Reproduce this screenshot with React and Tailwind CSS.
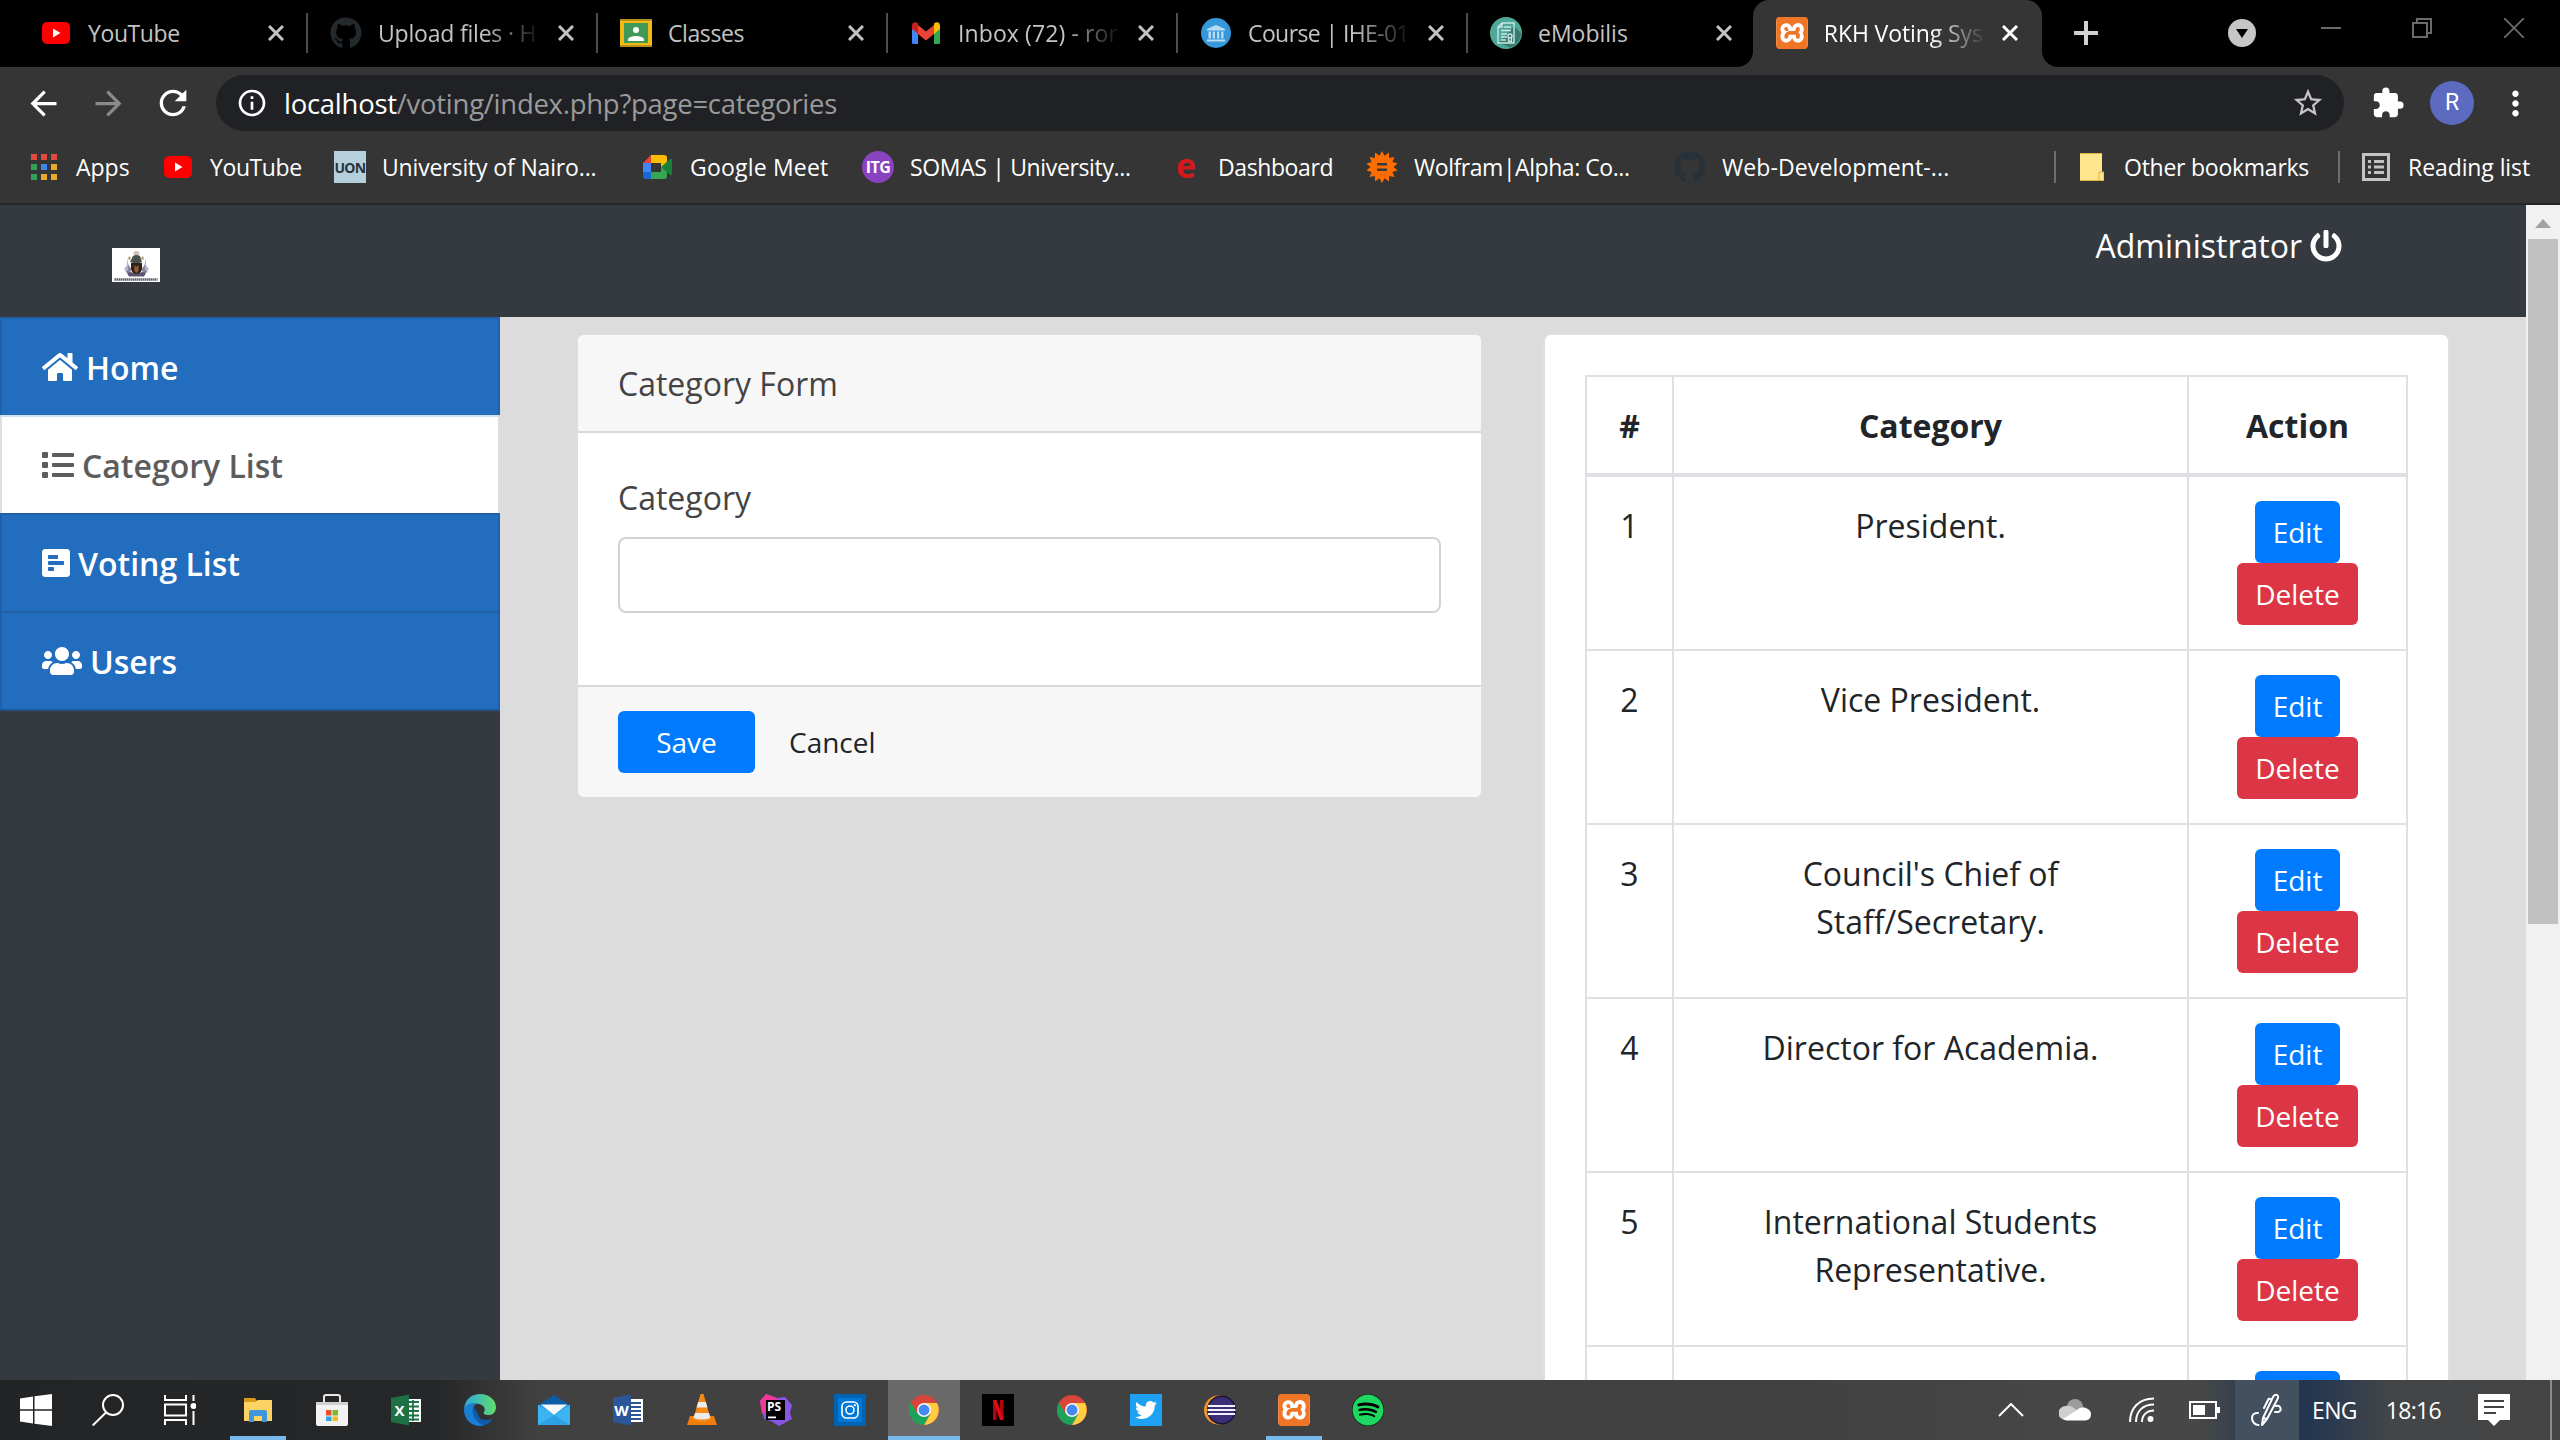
import React from "react";
import { FaHome, FaList, FaPollH, FaUsers, FaPowerOff, FaGithub, FaSpotify, FaTwitter } from "react-icons/fa";
import { MdArrowBack, MdArrowForward, MdRefresh, MdInfoOutline, MdStarBorder, MdExtension, MdMoreVert } from "react-icons/md";
import { SiXampp } from "react-icons/si";

/* ---------- favicons ---------- */

function YouTube() {
  return (
    <svg viewBox="0 0 32 32" className="size-8 shrink-0">
      <rect x="2" y="5" width="28" height="22" rx="5" fill="#f00" />
      <path d="M13 11.500v9l7.500-4.500z" fill="#fff" />
    </svg>
  );
}

function Classroom() {
  return (
    <svg viewBox="0 0 32 32" className="size-8 shrink-0">
      <rect y="2" width="32" height="28" fill="#f2bb13" />
      <path d="M0 2h32v2H0zM0 28h32v2H0z" fill="#b98f1f" />
      <rect x="4" y="6" width="24" height="20" fill="#3f9a57" />
      <circle cx="16" cy="13" r="3" fill="#fff" />
      <path d="M8 24v-2c2-4 14-4 16 0v2z" fill="#fff" />
    </svg>
  );
}

function Gmail() {
  return (
    <svg viewBox="0 0 32 32" className="size-8 shrink-0">
      <path d="M2 10v16q0 1 1.500 1H8V14z" fill="#4285f4" />
      <path d="M30 10v16q0 1-1.500 1H24V14z" fill="#34a853" />
      <path d="M8 8l8 6.500 8-6.500v9l-8 6.500-8-6.500z" fill="#ea4335" />
      <path d="M2 9c0-4 3-5 6-2.500V17l-6-5z" fill="#c5221f" />
      <path d="M30 9c0-4-3-5-6-2.500V17l6-5z" fill="#fbbc04" />
    </svg>
  );
}

function Course() {
  return (
    <svg viewBox="0 0 32 32" className="size-8 shrink-0">
      <circle cx="16" cy="16" r="15" fill="#3498db" />
      <path d="M7 12l9-4 9 4v1.500H7zM8.500 14.500H11v7H8.500zm4.200 0H15v7h-2.300zm4.300 0h2.300v7H17zm4.200 0h2.300v7h-2.300zM7 22.500h18V24.500H7z" fill="#b9dcf3" />
    </svg>
  );
}

function EMobilis() {
  return (
    <svg viewBox="0 0 32 32" className="size-8 shrink-0">
      <circle cx="16" cy="16" r="16" fill="#4fa89a" />
      <path d="M24 9l7 7c0 7-5 13-11 14.500L9 26z" fill="#37796f" />
      <path d="M12 6h12v20H8V10zM12 6v4H8M14 10h7M11 13.500h10M11 17h6M11 20h6M11 23h5" fill="none" stroke="#c8e8e2" strokeWidth="1.400" />
      <circle cx="20" cy="19" r="2" fill="none" stroke="#c8e8e2" strokeWidth="1.400" />
      <path d="M18.500 21v4l1.500-1 1.500 1v-4" fill="none" stroke="#c8e8e2" strokeWidth="1.200" />
    </svg>
  );
}

function Xampp() {
  return (
    <span className="flex size-8 shrink-0 items-center justify-center rounded-[5px] bg-white">
      <SiXampp className="size-8 text-[#ee7626]" />
    </span>
  );
}

const appColors = ["bg-[#e04a3f]", "bg-[#e04a3f]", "bg-[#e04a3f]", "bg-[#34a05a]", "bg-[#3f86e8]", "bg-[#e8a92a]", "bg-[#34a05a]", "bg-[#e8a92a]", "bg-[#e8a92a]"];

function AppsGrid() {
  return (
    <span className="grid size-8 shrink-0 grid-cols-[6px_6px_6px] place-content-center gap-[4px]">
      {appColors.map((c, i) => (
        <span key={i} className={"size-[6px] " + c} />
      ))}
    </span>
  );
}

function Meet() {
  return (
    <svg viewBox="0 0 32 32" className="size-8 shrink-0">
      <path d="M1 12l8-8v8z" fill="#ea4335" />
      <path d="M9 4h13q3 0 3 3v6l-6 4v-5H9z" fill="#fbbc04" />
      <path d="M1 12h8v9H1z" fill="#4285f4" />
      <path d="M1 21h8v7H4q-3 0-3-3z" fill="#1967d2" />
      <path d="M9 21h10v-5l6 4v5q0 3-3 3H9z" fill="#34a853" />
      <path d="M19 16l9-8q2-1 2 1v14q0 2-2 1z" fill="#188038" />
    </svg>
  );
}

const wolframPoints = Array.from({ length: 28 }, (_, i) => {
  const r = i % 2 ? 11.5 : 16;
  const a = (i * Math.PI) / 14;
  return `${16 + r * Math.sin(a)},${16 - r * Math.cos(a)}`;
}).join(" ");

function Wolfram() {
  return (
    <svg viewBox="0 0 32 32" className="size-8 shrink-0">
      <polygon points={wolframPoints} fill="#ff6d00" />
      <path d="M11 12h10v2.500H11zM11 17.500h10V20H11z" fill="#3a3a3a" />
    </svg>
  );
}

function Close() {
  return (
    <svg viewBox="0 0 16 16" className="size-4 shrink-0">
      <path d="M1 1l14 14M15 1L1 15" stroke="currentColor" strokeWidth="3" />
    </svg>
  );
}

/* ---------- browser chrome ---------- */

const fadeMask = "[mask-image:linear-gradient(to_right,black_65%,transparent_100%)]";

const tabs = [
  { icon: <YouTube />, label: "YouTube", cls: "tracking-[-0.4px]" },
  { icon: <FaGithub className="size-8 shrink-0 text-[#24292e]" />, label: "Upload files · H", cls: "tracking-[-0.2px]", fade: true },
  { icon: <Classroom />, label: "Classes", cls: "tracking-[-0.4px]" },
  { icon: <Gmail />, label: "Inbox (72) - ror", cls: "tracking-[0.1px]", fade: true },
  { icon: <Course />, label: "Course | IHE-01", cls: "tracking-[-0.6px]", fade: true },
  { icon: <EMobilis />, label: "eMobilis", cls: "tracking-normal", last: true },
];

function TabStrip() {
  return (
    <div className="flex h-[67px] shrink-0 bg-black text-[23px] text-[#c4c4c4]">
      <div className="flex items-center pl-[18px] pb-px">
        {tabs.map((t) => (
          <div
            key={t.label}
            className={"flex h-10 items-center border-r-2 pl-[22px] " + (t.last ? "w-[285.8px] border-transparent" : "w-[290px] border-[#4d4d4d]")}
          >
            {t.icon}
            <span className={"ml-4 w-[164px] overflow-hidden whitespace-nowrap " + t.cls + (t.fade ? " " + fadeMask : "")}>{t.label}</span>
            <span className={t.last ? "ml-[14px] flex" : "ml-[16px] flex"}>
              <Close />
            </span>
          </div>
        ))}
      </div>
      <div className="-ml-[17px] flex">
        <div className="flex items-end bg-[#353535]">
          <span className="h-full w-4 rounded-br-[16px] bg-black" />
        </div>
        <div className="flex bg-black">
          <div className="flex w-[289px] items-center rounded-t-[16px] bg-[#353535] pb-px pl-[23px] text-white">
            <Xampp />
            <span className={"ml-4 w-[163px] overflow-hidden whitespace-nowrap tracking-[-0.1px] " + fadeMask}>RKH Voting Sys</span>
            <span className="ml-[15px] flex">
              <Close />
            </span>
          </div>
        </div>
        <div className="bg-[#353535]">
          <div className="h-full w-4 rounded-bl-[16px] bg-black" />
        </div>
      </div>
      <div className="flex items-start">
        <svg viewBox="0 0 24 24" className="mt-[21px] ml-[16px] size-6">
          <path d="M12 0v24M0 12h24" stroke="#d0d0d0" strokeWidth="4" />
        </svg>
        <svg viewBox="0 0 28 28" className="mt-[19px] ml-[130px] size-7">
          <circle cx="14" cy="14" r="14" fill="#c6c6c6" />
          <path d="M8 10h12l-6 9z" fill="#000" />
        </svg>
        <svg viewBox="0 0 20 20" className="mt-[18px] ml-[65px] size-5">
          <path d="M0 10h20" stroke="#6b6b6b" strokeWidth="2" />
        </svg>
        <svg viewBox="0 0 20 20" className="mt-[18px] ml-[71px] size-5">
          <path d="M1 5h14v14H1zM5 5V1h14v14h-4" fill="none" stroke="#6b6b6b" strokeWidth="2" />
        </svg>
        <svg viewBox="0 0 20 20" className="mt-[18px] ml-[72px] size-5">
          <path d="M0 0l20 20M20 0L0 20" stroke="#6b6b6b" strokeWidth="1.800" />
        </svg>
      </div>
    </div>
  );
}

function Toolbar() {
  return (
    <div className="flex h-[64px] shrink-0 items-end bg-[#353535] text-white">
      <div className="flex h-14 w-[216px] items-center pl-[24px]">
        <MdArrowBack className="size-[39px]" />
        <MdArrowForward className="ml-[26px] size-[39px] text-[#8a8a8a]" />
        <MdRefresh className="ml-[25px] size-[40px]" />
      </div>
      <div className="flex h-14 w-[2128px] items-center rounded-full bg-[#202124] pl-[20px]">
        <MdInfoOutline className="size-8" />
        <span className="ml-4 pt-px text-[27.500px] leading-none tracking-[-0.270px] text-[#9a9a9a]">
          <span className="text-white">localhost</span>/voting/index.php?page=categories
        </span>
        <MdStarBorder className="mr-[19px] ml-auto size-[34px] text-[#c4c4c4]" />
      </div>
      <div className="flex h-14 items-center pl-[27px]">
        <MdExtension className="size-[34px]" />
        <span className="ml-[25px] flex size-11 items-center justify-center rounded-full bg-[#5c6bc0] font-[Roboto] text-[23px]">R</span>
        <MdMoreVert className="ml-[22px] size-[39px]" />
      </div>
    </div>
  );
}

const bookmarks = [
  { icon: <AppsGrid />, label: "Apps", w: "w-[134px]", cls: "tracking-normal" },
  { icon: <YouTube />, label: "YouTube", w: "w-[172px]", cls: "tracking-[-0.4px]" },
  {
    icon: <span className="flex size-8 shrink-0 items-center justify-center bg-[#b5d0dc] text-[14px] font-bold tracking-[-0.7px] text-[#26323c]">UON</span>,
    label: "University of Nairo...",
    w: "w-[308px]",
    cls: "tracking-[-0.15px]",
  },
  { icon: <Meet />, label: "Google Meet", w: "w-[220px]", cls: "tracking-[0.2px]" },
  {
    icon: <span className="flex size-8 shrink-0 items-center justify-center rounded-full bg-[#8a43c0] text-[16px] font-bold tracking-[-0.5px] text-white">ITG</span>,
    label: "SOMAS | University...",
    w: "w-[308px]",
    cls: "tracking-[-0.35px]",
  },
  {
    icon: <span className="flex size-8 shrink-0 items-center justify-center pb-1 text-[34px] font-bold text-[#d3191c]">e</span>,
    label: "Dashboard",
    w: "w-[196px]",
    cls: "tracking-[-0.4px]",
  },
  { icon: <Wolfram />, label: "Wolfram|Alpha: Co...", w: "w-[308px]", cls: "tracking-[-0.45px]" },
  { icon: <FaGithub className="size-8 shrink-0 text-[#27313a]" />, label: "Web-Development-...", w: "w-[380px]", cls: "tracking-[0.1px]" },
];

function BookmarksBar() {
  return (
    <div className="flex h-[74px] shrink-0 items-center border-b-2 border-[#232629] bg-[#353535] pl-[28px] text-[23px] text-white">
      {bookmarks.map((b) => (
        <div key={b.label} className={"flex shrink-0 items-center " + b.w}>
          {b.icon}
          <span className={"ml-4 whitespace-nowrap " + b.cls}>{b.label}</span>
        </div>
      ))}
      <span className="h-8 w-0.5 bg-[#6e6e6e]" />
      <svg viewBox="0 0 24 28" className="ml-[24px] h-7 w-6">
        <path d="M0 0h22v28H0z" fill="#ffe68c" />
        <path d="M19 19h5v9h-5z" fill="#ffe68c" stroke="#d9b440" />
        <path d="M0 .5h22M0 27.500h24" stroke="#d9b440" />
      </svg>
      <span className="ml-[20px] tracking-[-0.25px]">Other bookmarks</span>
      <span className="ml-[29px] h-8 w-0.5 bg-[#6e6e6e]" />
      <svg viewBox="0 0 28 28" className="ml-[22px] size-7" fill="none" stroke="#c4c4c4" strokeWidth="3">
        <rect x="1.500" y="1.500" width="25" height="25" />
        <path d="M6 8.500h3M12 8.500h10M6 14h3M12 14h10M6 19.500h3M12 19.500h10" />
      </svg>
      <span className="ml-[18px] tracking-[-0.1px]">Reading list</span>
    </div>
  );
}

/* ---------- voting page ---------- */

function Crest() {
  return (
    <svg viewBox="0 0 48 34" className="h-[34px] w-12 bg-white">
      <ellipse cx="24.500" cy="5.500" rx="3" ry="2.500" fill="#cdbfb2" />
      <path d="M21 8q3.500-2 7 0l2 6-5.500 2L18 14z" fill="#4b524f" />
      <path d="M17 8l2 2-1 2-2-1zM31 8l-2 2 1 2 2-1z" fill="#b5a26a" />
      <path d="M15 10l1.500 7 3 4-2 5-4-2 2-6zM34 10l-1.500 7-3 4 2 5 4-2-2-6z" fill="#8d84a0" />
      <path d="M12 21l4-5v6l-2 1zM37 21l-4-5v6l2 1z" fill="#b9b2c8" />
      <path d="M19 15h11v6q-1 5-5.500 6-4.500-1-5.500-6z" fill="#33211f" />
      <path d="M22.500 17l2 2 2-2v6l-2 2-2-2z" fill="#96602c" />
      <path d="M15 25l4-1q5.500 4 11 0l4 1-2 3.500H17z" fill="#5d526c" />
      <path d="M2.500 31.500h43" stroke="#4d4d58" strokeWidth="2.600" strokeDasharray="1.400 .6" />
    </svg>
  );
}

const nav = [
  { icon: <FaHome className="h-8 w-9" />, label: "Home" },
  { icon: <FaList className="size-8" />, label: "Category List", active: true },
  { icon: <FaPollH className="h-8 w-7" />, label: "Voting List" },
  { icon: <FaUsers className="h-8 w-10" />, label: "Users" },
];

function Sidebar() {
  return (
    <div className="w-[500px] shrink-0 bg-[#353a41]">
      <div className="border-b-2 border-[#1f5591]">
        {nav.map((n) => (
          <div
            key={n.label}
            className={
              "flex h-[98px] items-center gap-2 border-x-2 border-t-2 pl-10 font-semibold " +
              (n.active ? "border-x-[#dfdfdf] border-t-[#cfdff0] bg-white text-[#5c5c5c]" : "border-[#1f60a8] bg-[#226dbe] text-white")
            }
          >
            {n.icon}
            <span className="pt-px">{n.label}</span>
          </div>
        ))}
      </div>
    </div>
  );
}

function CategoryForm() {
  return (
    <div className="w-[907px] overflow-hidden rounded-[8px] border-2 border-[#dddddd] bg-white text-[#444]">
      <div className="border-b-2 border-[#d8d8d8] bg-[#f7f7f7] px-10 pt-[25px] pb-[23px] leading-[48px]">Category Form</div>
      <div className="p-10">
        <label className="mb-[15px] block pt-px leading-[48px]">Category</label>
        <div className="mb-8 h-[76px] rounded-[8px] border-2 border-[#d2d3d4]" />
      </div>
      <div className="flex border-t-2 border-[#d8d8d8] bg-[#f7f7f7] px-10 py-6 text-[28px]">
        <button className="h-[62px] w-[137px] rounded-[6px] bg-[#007bff] text-white">Save</button>
        <button className="ml-[34px] h-[62px] text-[#212529]">Cancel</button>
      </div>
    </div>
  );
}

const rows = [
  "President.",
  "Vice President.",
  "Council's Chief of Staff/Secretary.",
  "Director for Academia.",
  "International Students Representative.",
];

function CategoryTable() {
  return (
    <div className="h-[1200px] w-[907px] rounded-[8px] border-2 border-[#e0e0e0] bg-white p-10 text-center leading-[48px] text-[#212529]">
      <div className="border-l-2 border-t-2 border-[#dfe0e3]">
        <div className="grid h-[100px] grid-cols-[87px_515px_219px] border-b-4 border-[#dedfe4] font-bold">
          {["#", "Category", "Action"].map((h) => (
            <div key={h} className="border-r-2 border-[#dfe0e3] pt-[25px]">{h}</div>
          ))}
        </div>
        {rows.map((r, i) => (
          <div key={r} className="grid h-[174px] grid-cols-[87px_515px_219px] border-b-2 border-[#dfe0e3]">
            <div className="border-r-2 border-[#dfe0e3] pt-[25px]">{i + 1}</div>
            <div className="border-r-2 border-[#dfe0e3] px-6 pt-[25px]">{r}</div>
            <div className="flex flex-col items-center border-r-2 border-[#dfe0e3] py-6 text-[28px] leading-[42px] text-white">
              <button className="h-[62px] w-[85px] shrink-0 rounded-[6px] bg-[#007bff]">Edit</button>
              <button className="h-[62px] w-[121px] shrink-0 rounded-[6px] bg-[#dc3545]">Delete</button>
            </div>
          </div>
        ))}
        <div className="grid h-[174px] grid-cols-[87px_515px_219px]">
          <div className="border-r-2 border-[#dfe0e3]" />
          <div className="border-r-2 border-[#dfe0e3]" />
          <div className="flex justify-center border-r-2 border-[#dfe0e3] pt-6">
            <button className="h-[62px] w-[85px] rounded-[6px] bg-[#007bff]" />
          </div>
        </div>
      </div>
    </div>
  );
}

function Page() {
  return (
    <div className="flex h-[1175px] shrink-0 overflow-hidden bg-[#dcdcdc] text-[32px]">
      <div className="flex w-[2526px] shrink-0 flex-col">
        <div className="flex h-[112px] shrink-0 items-start justify-between bg-[#353a41] pr-[184px] pl-[112px] text-white">
          <div className="pt-[43px]">
            <Crest />
          </div>
          <div className="flex items-center gap-2 pt-[16px] leading-[48px]">
            <span className="pt-px">Administrator</span>
            <FaPowerOff className="size-8" />
          </div>
        </div>
        <div className="flex">
          <div className="h-[1063px] bg-[#353a41]">
            <Sidebar />
          </div>
          <div className="flex h-[1063px] flex-1 items-start justify-between overflow-hidden pt-4 pr-[76px] pl-[76px]">
            <CategoryForm />
            <CategoryTable />
          </div>
        </div>
      </div>
      <div className="w-[34px] bg-[#f1f1f1] px-0.5">
        <div className="flex h-[34px] items-center justify-center pt-0.5">
          <svg viewBox="0 0 16 9" className="h-[9px] w-4">
            <path d="M0 9l8-9 8 9z" fill="#a3a3a3" />
          </svg>
        </div>
        <div className="h-[685px] bg-[#c1c1c1]" />
      </div>
    </div>
  );
}

/* ---------- taskbar ---------- */

function Chrome() {
  return (
    <svg viewBox="0 0 32 32" className="size-[30px]">
      <circle cx="16" cy="16" r="16" fill="#d9453a" />
      <path d="M2.100 8A16 16 0 0 0 16 32l7-12-7-4-7 4z" fill="#1da259" />
      <path d="M16 32A16 16 0 0 0 29.900 8.500H16v7.500l7 4z" fill="#ffcd41" />
      <circle cx="16" cy="16" r="7.500" fill="#f5f5f5" />
      <circle cx="16" cy="16" r="5.800" fill="#4587f3" />
    </svg>
  );
}

function OfficeApp({ letter, color, sheet }) {
  return (
    <svg viewBox="0 0 30 32" className="h-8 w-[30px]">
      <path d="M14 5h16v23H14z" fill="#fff" />
      <path d={sheet ? "M16 8h12M16 12.500h12M16 17h12M16 21.500h12M16 25.500h12M22 6v21" : "M18 9h10M18 13h10M18 17h10M18 21h10M18 25h10"} stroke={color} strokeWidth="1.800" />
      <path d="M0 4l18-3.500v31L0 28z" fill={color} />
      <text x="8.500" y="21.500" fontSize="15" fontWeight="700" textAnchor="middle" fill="#fff" fontFamily="Open Sans, sans-serif">{letter}</text>
    </svg>
  );
}

const startIcons = [
  <svg viewBox="0 0 32 32" className="size-8" fill="#fff">
    <path d="M0 4.500l13-2V15.200H0zM14.500 2.200L32 0v15.200H14.500zM0 16.700h13v12.800L0 27.500zM14.500 16.700H32V32l-17.500-2.300z" />
  </svg>,
  <svg viewBox="0 0 32 32" className="size-8" fill="none" stroke="#fff" strokeWidth="2">
    <circle cx="21" cy="11" r="10" />
    <path d="M14 18.500L.7 31.500" />
  </svg>,
  <svg viewBox="0 0 32 32" className="size-8" fill="none" stroke="#fff" strokeWidth="2">
    <path d="M1 1v5h21V1M1 31v-5h21v5M1 10.500h21v11H1zM29.500 1v6M29.500 17v14" />
    <circle cx="29.500" cy="12" r="2" fill="#fff" />
  </svg>,
];

const taskIcons = [
  {
    line: true,
    icon: (
      <svg viewBox="0 0 28 26" className="h-[26px] w-7">
        <path d="M0 1h11l2 3v4H0z" fill="#d99a1b" />
        <path d="M0 5h11l3-2h14v21H0z" fill="#fdd365" />
        <path d="M5 25V15q0-2 2-2h14q2 0 2 2v10h-5v-6h-8v6z" fill="#3f97d8" />
      </svg>
    ),
  },
  {
    icon: (
      <svg viewBox="0 0 32 32" className="size-8">
        <path d="M8 11V3q0-2 2-2h12q2 0 2 2v8" fill="none" stroke="#e8e8e8" strokeWidth="2" />
        <path d="M0 8h32v22q0 2-2 2H2q-2 0-2-2z" fill="#f2f2f2" />
        <path d="M0 8h32v3H0z" fill="#d0d0d0" />
        <path d="M10 16h5.500v5.500H10z" fill="#e8502a" />
        <path d="M16.500 16H22v5.500h-5.500z" fill="#7db82a" />
        <path d="M10 22.500h5.500V27H10z" fill="#2aa3e8" />
        <path d="M16.500 22.500H22V27h-5.500z" fill="#f8b71c" />
      </svg>
    ),
  },
  { icon: <OfficeApp letter="X" color="#1e7145" sheet /> },
  {
    icon: (
      <svg viewBox="0 0 32 32" className="size-8">
        <defs>
          <linearGradient id="edgeTop" x1="0" x2="1">
            <stop offset="0" stopColor="#2aa8e0" />
            <stop offset="1" stopColor="#62dc6c" />
          </linearGradient>
        </defs>
        <path d="M0 16A16 16 0 0 0 19 31.700q6-1.200 10-7-14 4-15-5L9 12z" fill="#0f5cad" />
        <path d="M0 15C1 5 8 0 16 0c9 0 16 6 16 13 0 5-3 8-7 8-5 0-6-1.500-5-3 2-3 0-7-5-8C9 9 2 11 0 15z" fill="url(#edgeTop)" />
        <path d="M0 15c2-5 8-7 12-5-5 3-6 14 7 21.700C8 33 0 26 0 15z" fill="#1b7fd4" />
      </svg>
    ),
  },
  {
    icon: (
      <svg viewBox="0 0 32 30" className="h-[30px] w-8">
        <path d="M0 10L16 0l16 10z" fill="#0c5ba5" />
        <path d="M0 10h32v20H0z" fill="#2ea0e6" />
        <path d="M3 9.500h26L16 20z" fill="#f4f8fb" />
        <path d="M0 10l16 10L0 30zM32 10L16 20l16 10z" fill="#3db4f2" />
      </svg>
    ),
  },
  { icon: <OfficeApp letter="W" color="#2b579a" /> },
  {
    icon: (
      <svg viewBox="0 0 30 32" className="h-8 w-[30px]">
        <path d="M3 22h24l3 9H0z" fill="#ee7d0c" />
        <path d="M13.500 0h3L24 26q-9 4-18 0z" fill="#f58a17" />
        <path d="M11.200 8h7.600l1.700 5.500h-11zM8 19h14l1.400 5q-8.400 3-16.800 0z" fill="#ececec" />
      </svg>
    ),
  },
  {
    icon: (
      <svg viewBox="0 0 32 32" className="size-8">
        <path d="M0 7L6 0l11 4 8-1 7 8-2 8 2 6-13 7-8-5-7-2z" fill="#8a56e8" />
        <path d="M0 7L6 0l11 4 1 6-12 8-4 2z" fill="#f0399a" />
        <rect x="6" y="6" width="19" height="20" fill="#000" />
        <text x="7" y="17" fontSize="12" fontWeight="700" fill="#fff" fontFamily="Open Sans, sans-serif">PS</text>
        <path d="M8 22.500h8v1.800H8z" fill="#fff" />
      </svg>
    ),
  },
  {
    icon: (
      <svg viewBox="0 0 32 32" className="size-8">
        <rect width="32" height="32" fill="#0063b1" />
        <rect x="4" y="4" width="24" height="24" fill="#0078d7" />
        <rect x="8" y="8" width="16" height="16" rx="4.500" fill="none" stroke="#fff" strokeWidth="1.600" />
        <circle cx="16" cy="16" r="4" fill="none" stroke="#fff" strokeWidth="1.600" />
        <circle cx="20.800" cy="11.200" r="1.100" fill="#fff" />
      </svg>
    ),
  },
  { icon: <Chrome />, line: true, active: true },
  {
    icon: (
      <svg viewBox="0 0 32 32" className="size-8">
        <rect width="32" height="32" fill="#000" />
        <path d="M11 6h3.500v20H11zM18 6h3.500v20H18z" fill="#b1060f" />
        <path d="M11 6h3.500l7 20H18z" fill="#e50914" />
      </svg>
    ),
  },
  { icon: <Chrome /> },
  {
    icon: (
      <span className="flex size-8 items-center justify-center bg-[#1da1f2]">
        <FaTwitter className="size-[22px] text-white" />
      </span>
    ),
  },
  {
    icon: (
      <svg viewBox="0 0 32 32" className="size-8">
        <circle cx="14.500" cy="16" r="14.500" fill="#f0932a" />
        <circle cx="17.500" cy="16" r="14.500" fill="#1a1633" />
        <circle cx="17.500" cy="16" r="13" fill="#3a2f78" />
        <path d="M4 11h27v2H4zM3.500 15h28v2h-28zM4 19h27v2H4z" fill="#f2f0f8" />
      </svg>
    ),
  },
  { icon: <Xampp />, line: true },
  {
    icon: (
      <span className="flex size-8 items-center justify-center rounded-full bg-black">
        <FaSpotify className="size-8 text-[#1ed760]" />
      </span>
    ),
  },
];

function Taskbar() {
  return (
    <div className="flex h-[60px] shrink-0 bg-[linear-gradient(90deg,#232425_0px,#262728_440px,#414141_540px,#414141_1800px,#474747_2100px,#474747_2200px,#33404f_2240px,#22344f_2300px,#2a3a50_2330px,#434547_2390px,#444_2560px)] text-white">
      <div className="flex">
        {startIcons.map((icon, i) => (
          <div key={i} className="flex w-[72px] items-center justify-center">{icon}</div>
        ))}
      </div>
      <div className="ml-[5px] flex">
        {taskIcons.map((t, i) => (
          <div key={i} className="flex w-[74px] justify-center">
            <div className={"flex flex-col items-center " + (t.active ? "w-[72px] bg-[#696969]" : "w-[56px]")}>
              <div className="flex h-[56px] items-center pt-1">{t.icon}</div>
              <div className={t.line ? "h-1 w-full bg-[#76b9ed]" : "h-1 w-full"} />
            </div>
          </div>
        ))}
      </div>
      <div className="ml-auto flex items-center">
        <svg viewBox="0 0 26 14" className="h-[14px] w-[26px]">
          <path d="M1 13L13 1l12 12" fill="none" stroke="#fff" strokeWidth="2" />
        </svg>
        <svg viewBox="0 0 32 22" className="ml-[35px] h-[22px] w-8">
          <path d="M8 8a8 8 0 0 1 16 0l-7 5z" fill="#9c9c9c" />
          <path d="M7 21A7 7 0 0 1 6 7q6-1 10 3l8 5-8 6z" fill="#cfcfcf" />
          <path d="M4 20l14-9q4-4 9-2 5 2 5 6 0 6-6 6.500H7z" fill="#fff" />
        </svg>
        <svg viewBox="0 0 26 26" className="ml-[38px] size-[26px]" fill="none" stroke="#fff" strokeWidth="2">
          <path d="M1 25C1 11 10 1.500 25 1.500M7 25C7 14 14 7.500 25 7.500M13 25c0-7 5-11.500 12-11.500" />
          <circle cx="21.500" cy="22" r="3" fill="#fff" stroke="none" />
        </svg>
        <svg viewBox="0 0 31 18" className="ml-[34px] h-[18px] w-[31px]">
          <path d="M1 1h26v16H1z" fill="none" stroke="#fff" strokeWidth="2" />
          <path d="M4 4h12v10H4zM28 6h3v6h-3z" fill="#fff" />
        </svg>
        <div className="ml-[15px] flex h-[60px] w-16 items-center justify-center bg-[#435060]">
          <svg viewBox="0 0 32 34" className="h-[34px] w-8" fill="none" stroke="#fff" strokeWidth="2" strokeLinecap="round" strokeLinejoin="round">
            <path d="M7 20c-4-.5-6 2-6 5 0 4 3 7 6.500 7M11 32l1-7L22 4q1.500-3 4-2 2 1.500.5 4L16 26zM12 25l4 1M19 6q-1-1-2 1l-4 8M25 13c4-2 7 5 2 6h-3" />
          </svg>
        </div>
        <span className="ml-[13px] text-[23px] tracking-[-0.7px]">ENG</span>
        <span className="ml-[29px] text-[23px] tracking-[-0.7px]">18:16</span>
        <svg viewBox="0 0 32 32" className="ml-[37px] size-8">
          <path d="M0 0h32v26H22l-6 6-6-6H0z" fill="#fff" />
          <path d="M6 7h20M6 13h20M6 19h12" stroke="#444" strokeWidth="2" />
        </svg>
        <span className="mr-[8px] ml-[40px] h-[60px] w-0.5 bg-[#8c8c8c]" />
      </div>
    </div>
  );
}

export default function App() {
  return (
    <div className="flex h-[1440px] w-[2560px] flex-col overflow-hidden bg-black font-['Open_Sans',sans-serif]">
      <TabStrip />
      <Toolbar />
      <BookmarksBar />
      <Page />
      <Taskbar />
    </div>
  );
}
